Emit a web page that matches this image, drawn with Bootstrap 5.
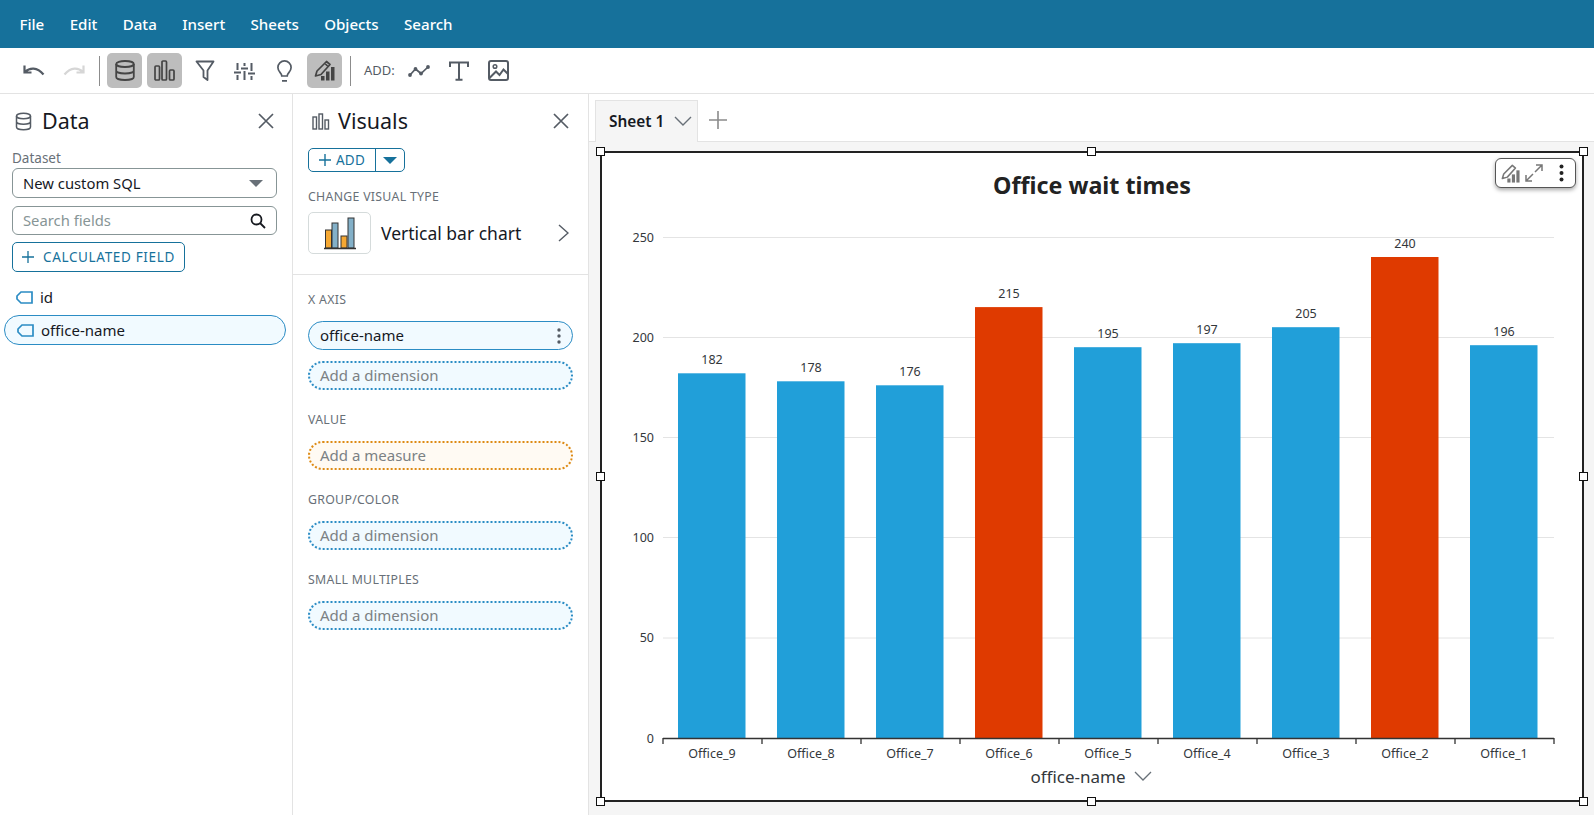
<!DOCTYPE html>
<html lang="en"><head><meta charset="utf-8"><title>Office wait times</title>
<link href="https://cdn.jsdelivr.net/npm/bootstrap@5.3.0/dist/css/bootstrap.min.css" rel="stylesheet">
<style>
html,body{height:100%;overflow:hidden}
body{font-family:"Noto Sans","Liberation Sans",sans-serif;color:#16191f;font-size:14.8px;display:flex;flex-direction:column;background:#fff}
.topbar{height:48px;background:#16719b;padding:0 19px 0 19.500px;gap:25.400px;flex:none}
.topbar a{color:#fff;font-size:15.100px;font-weight:500;text-decoration:none;padding:0}
.toolbar{height:46px;border-bottom:1px solid #e3e3e3;padding:0 0 0 16px;flex:none;color:#555}
.tb-btn{width:35px;height:35px;padding:0;border:0;border-radius:5px;display:flex;align-items:center;justify-content:center;color:#545b64;margin-right:5px}
.tb-btn.on{background:#bdbdbd;color:#444}
.tb-sep{width:1px;height:30px;background:#8c8c8c;margin:0 7px 0 3px}
.tb-add{font-size:13px;color:#545b64;margin:0 3px 0 6px;width:34px}
.mainrow{flex:1;min-height:0}
.sidepanel{flex:none;border-right:1px solid #e3e3e3;background:#fff;position:relative}
.p-data{width:293px}.p-vis{width:296px}
.ptitle{font-size:21.500px;line-height:30px;font-weight:400;margin:0;color:#16191f}
.phead{height:30px;margin-top:12px;padding:0 18px 0 15px;gap:10px}
.p-vis .phead{padding:0 19px 0 19px;gap:8px}
.xbtn{margin-left:auto;color:#545b64;display:flex}
.lbl{font-size:13.500px;color:#687078;line-height:16px}
.sel{height:30px;border:1px solid #879596;border-radius:6px;padding:0 10px;font-size:14.800px;color:#16191f;margin:0 15px 0 12px;width:265px}
.caret{width:0;height:0;border-left:7px solid transparent;border-right:7px solid transparent;border-top:7px solid #687078}
.searchbox{height:29px;border:1px solid #879596;border-radius:6px;padding:0 10px;color:#879596;font-size:14.800px;margin:9px 15px 0 12px;width:265px}
.calc{margin:7px 0 0 12px;height:30px;width:173px;border:1px solid #16719b;border-radius:5px;color:#16719b;font-size:13.500px;font-weight:400;letter-spacing:.65px;padding:0 0 0 9px;gap:9px;background:#fff;white-space:nowrap}
.calc:hover{color:#16719b;border-color:#16719b}
.frow{height:29px;padding-left:16px;gap:7px;font-size:15px;color:#16191f}
.fpill{margin:3px 6px 0 4px;height:30px;border:1px solid #2b8cc4;border-radius:15px;background:#f1faff;padding-left:12px}
.addbtn{margin:12px 0 0 15px;width:97px;height:24px;border:1px solid #16719b;border-radius:5px;color:#16719b;font-size:13.500px;font-weight:400;letter-spacing:.3px;overflow:hidden}
.addbtn span.a{flex:1;display:flex;align-items:center;justify-content:center;gap:5px;height:100%}
.addbtn span.b{width:29px;height:100%;border-left:1px solid #16719b;display:flex;align-items:center;justify-content:center}
.addbtn .caret{border-top-color:#16719b}
.seclbl{font-size:12.300px;letter-spacing:.3px;color:#687078;line-height:16px;padding-left:15px;text-transform:uppercase}
.typer{margin:7px 15px 0;height:42px;gap:10px;font-size:17.500px}
.thumb{width:63px;height:42px;border:1px solid #d5dbdb;border-radius:5px}
.pdiv{border-top:1px solid #e3e3e3;margin-top:20px;padding-top:17px}
.well{margin:13px 15px 0;height:29px;border-radius:15px;padding:0 11px;font-size:15px;display:flex;align-items:center;color:#16191f}
.well.solid{border:1px solid #2b8cc4;background:#f1faff;justify-content:space-between}
.well.dim{border:2px dotted #2b8cc4;background:#f1faff;color:#7b8184;margin-top:11px;padding-left:10px}
.well.meas{border:2px dotted #dd8a14;background:#fffaf3;color:#7b8184;margin-top:13px;padding-left:10px}
.canvasarea{flex:1;min-width:0;background:#f5f5f5;display:flex;flex-direction:column}
.tabstrip{height:48px;background:#fff;border-bottom:1px solid #e3e3e3;padding-left:6px;flex:none}
.sheet-tab{width:103px;height:42px;margin-top:6px;background:#f5f5f5;border:1px solid #e3e3e3;border-bottom:0;padding:0 5px 0 13px;font-weight:600;font-size:15.400px;justify-content:space-between}
.sheet-tab span{padding-top:2px}
.plus{margin:4px 0 0 11px;color:#8b8b8b;display:flex}
.stage{flex:1;padding:9px 10px 13px 11px;min-height:0}
.visual{position:relative;height:100%;border:2px solid #222;background:#fff}
.visual svg.chart{display:block;width:100%;height:100%}
.hd{position:absolute;width:9px;height:9px;background:#fff;border:1.5px solid #111}
.hl{left:-6px}.hc{left:calc(50% - 5px)}.hr{right:-6px}.ht{top:-6px}.hm{top:calc(50% - 5px)}.hb{bottom:-6px}
.mini{position:absolute;top:5px;right:6px;width:81px;height:30px;background:#fff;border:1px solid #555;border-radius:6px;box-shadow:0 2px 4px rgba(0,0,0,.35);padding-left:5px;gap:5px;color:#777}
svg text{font-family:"Noto Sans","Liberation Sans",sans-serif;fill:#33373b}
</style></head>
<body>
<nav class="navbar topbar d-flex align-items-center justify-content-start flex-nowrap">
<a href="#">File</a><a href="#">Edit</a><a href="#">Data</a><a href="#">Insert</a><a href="#">Sheets</a><a href="#">Objects</a><a href="#">Search</a>
</nav>
<div class="toolbar d-flex align-items-center">
<button class="btn tb-btn" aria-label="Undo"><svg width="22" height="14" viewBox="0 0 22 14" fill="none" stroke="#545b64" stroke-width="2.200"><path d="M1.500 1.500v7h7M2 8c4.500-4.500 12-5.500 18.500 2.500"/></svg></button>
<button class="btn tb-btn" aria-label="Redo"><svg width="22" height="14" viewBox="0 0 22 14" fill="none" stroke="#d6d6d6" stroke-width="2.200"><path d="M20.500 1.500v7h-7M20 8C15.500 3.500 8 2.500 1.500 10.500"/></svg></button>
<span class="tb-sep"></span>
<button class="btn tb-btn on" aria-label="Data"><svg width="20" height="21" viewBox="0 0 20 21" fill="none" stroke="currentColor" stroke-width="1.800"><ellipse cx="10" cy="4" rx="8.800" ry="3"/><path d="M1.200 4v13c0 1.700 3.900 3 8.800 3s8.800-1.300 8.800-3V4M1.200 10.500c0 1.700 3.900 3 8.800 3s8.800-1.300 8.800-3"/></svg></button>
<button class="btn tb-btn on" aria-label="Visuals"><svg width="21" height="21" viewBox="0 0 21 21" fill="none" stroke="currentColor" stroke-width="1.700"><rect x="1" y="6" width="4.500" height="14" rx="1"/><rect x="8" y="1" width="4.500" height="19" rx="1"/><rect x="15.500" y="10" width="4.500" height="10" rx="1"/></svg></button>
<button class="btn tb-btn" aria-label="Filter"><svg width="20" height="21" viewBox="0 0 20 21" fill="none" stroke="currentColor" stroke-width="1.800"><path d="M1.500 1.500h17l-6 9v9.500l-4-3v-6.500z" stroke-linejoin="round"/></svg></button>
<button class="btn tb-btn" aria-label="Properties"><svg width="21" height="18" viewBox="0 0 21 18" fill="none" stroke="currentColor" stroke-width="2"><path d="M3.500 1v7M3.500 13v5M10.500 1v3M10.500 9v9M17.500 1v8M17.500 14v4M0 10.500h7M7 6.500h7M14 11.500h7" stroke-width="2"/></svg></button>
<button class="btn tb-btn" aria-label="Insights"><svg width="15" height="22" viewBox="0 0 15 22" fill="none" stroke="currentColor" stroke-width="1.700"><path d="M4.800 16c0-3-3.900-4-3.900-8.500a6.600 6.600 0 0 1 13.200 0c0 4.500-3.900 5.500-3.900 8.500zM5 20.800h5"/></svg></button>
<button class="btn tb-btn on" aria-label="Format"><svg width="21" height="21" viewBox="0 0 21 21" fill="none" stroke="currentColor" stroke-width="1.700"><path d="M1.500 16l1.500-5L12.500 1.500l3.500 3L7 14.500z M11 3.500l3 3" stroke-linejoin="round"/><rect x="7" y="16" width="3.500" height="4.500" fill="currentColor" stroke="none"/><rect x="12" y="11.500" width="3.500" height="9" fill="currentColor" stroke="none"/><rect x="17" y="7" width="3.500" height="13.500" fill="currentColor" stroke="none"/></svg></button>
<span class="tb-sep"></span>
<span class="tb-add">ADD:</span>
<button class="btn tb-btn" aria-label="Add line"><svg width="22" height="12" viewBox="0 0 22 12" fill="none" stroke="currentColor" stroke-width="1.700"><path d="M2 10l5.500-6 5.500 4.500L20 2"/><g fill="currentColor" stroke="none"><circle cx="2" cy="10" r="1.900"/><circle cx="7.500" cy="4" r="1.900"/><circle cx="13" cy="8.500" r="1.900"/><circle cx="20" cy="2" r="1.900"/></g></svg></button>
<button class="btn tb-btn" aria-label="Add text"><svg width="20" height="20" viewBox="0 0 20 20" fill="none" stroke="currentColor" stroke-width="2"><path d="M1 6V1.500h18V6M10 1.500v17M6.500 18.800h7"/></svg></button>
<button class="btn tb-btn" aria-label="Add image"><svg width="21" height="21" viewBox="0 0 21 21" fill="none" stroke="currentColor" stroke-width="2"><rect x="1" y="1" width="19" height="19" rx="2"/><circle cx="7" cy="6.500" r="1.800" stroke-width="1.500"/><path d="M1.500 18l6.500-6.500 3.500 3.500 4-5.500 4.500 4.500"/></svg></button>
</div>
<div class="mainrow d-flex">
<aside class="sidepanel p-data">
<div class="phead d-flex align-items-center">
<svg width="17" height="19" viewBox="0 0 17 19" fill="none" stroke="#545b64" stroke-width="1.500"><ellipse cx="8.500" cy="4" rx="7" ry="2.800"/><path d="M1.500 4v11c0 1.500 3 2.800 7 2.800s7-1.300 7-2.800V4M1.500 9.500c0 1.500 3 2.800 7 2.800s7-1.300 7-2.800"/></svg>
<h2 class="ptitle">Data</h2>
<span class="xbtn"><svg width="16" height="16" viewBox="0 0 16 16" fill="none" stroke="currentColor" stroke-width="1.700"><path d="M1 1l14 14M15 1L1 15"/></svg></span>
</div>
<div class="lbl" style="margin:14px 0 2px 12px">Dataset</div>
<div class="sel d-flex align-items-center justify-content-between"><span>New custom SQL</span><span class="caret" style="margin-right:3px"></span></div>
<div class="searchbox d-flex align-items-center justify-content-between" style="margin-top:8px"><span>Search fields</span><svg width="16" height="16" viewBox="0 0 16 16" fill="none" stroke="#16191f" stroke-width="1.800"><circle cx="6.500" cy="6.500" r="5"/><path d="M10 10l5 5"/></svg></div>
<button class="btn calc d-flex align-items-center"><svg width="12" height="12" viewBox="0 0 12 12" stroke="#16719b" stroke-width="1.300"><path d="M6 0v12M0 6h12"/></svg>CALCULATED FIELD</button>
<div class="frow d-flex align-items-center" style="margin-top:11px"><svg width="17" height="13" viewBox="0 0 17 13" fill="none" stroke="#2b8cc4" stroke-width="1.700"><path d="M16 1H5L1 5l0 3 4 4h11z"/></svg>id</div>
<div class="fpill frow d-flex align-items-center"><svg width="17" height="13" viewBox="0 0 17 13" fill="none" stroke="#2b8cc4" stroke-width="1.700"><path d="M16 1H5L1 5l0 3 4 4h11z"/></svg>office-name</div>
</aside>
<aside class="sidepanel p-vis">
<div class="phead d-flex align-items-center">
<svg width="18" height="17" viewBox="0 0 18 17" fill="none" stroke="#545b64" stroke-width="1.400"><rect x="1" y="4" width="3.500" height="12"/><rect x="7" y="1" width="3.500" height="15"/><rect x="13" y="7" width="3.500" height="9"/></svg>
<h2 class="ptitle">Visuals</h2>
<span class="xbtn"><svg width="16" height="16" viewBox="0 0 16 16" fill="none" stroke="currentColor" stroke-width="1.700"><path d="M1 1l14 14M15 1L1 15"/></svg></span>
</div>
<div class="addbtn d-flex align-items-center"><span class="a"><svg width="12" height="12" viewBox="0 0 12 12" stroke="#16719b" stroke-width="1.400"><path d="M6 0v12M0 6h12"/></svg>ADD</span><span class="b"><span class="caret"></span></span></div>
<div class="seclbl" style="margin-top:17px">Change visual type</div>
<div class="typer d-flex align-items-center">
<span class="thumb d-flex align-items-center justify-content-center"><svg width="34" height="36" viewBox="0 0 34 36"><g stroke="#333" stroke-width="1"><rect x="2.500" y="15" width="6" height="18" fill="#f5a833"/><rect x="9" y="8" width="6" height="25" fill="#83b0c8"/><rect x="18" y="21" width="6" height="12" fill="#f5a833"/><rect x="25" y="3" width="6" height="30" fill="#83b0c8"/></g><path d="M1 33.500h32" stroke="#333" stroke-width="1.500"/></svg></span>
<span>Vertical bar chart</span>
<svg class="ms-auto" style="margin-right:4px" width="11" height="18" viewBox="0 0 11 18" fill="none" stroke="#545b64" stroke-width="1.400"><path d="M1 1l9 8-9 8"/></svg>
</div>
<div class="pdiv"><div class="seclbl">X axis</div></div>
<div class="well solid"><span>office-name</span><svg width="4" height="16" viewBox="0 0 4 16" fill="#545b64"><circle cx="2" cy="2" r="1.700"/><circle cx="2" cy="8" r="1.700"/><circle cx="2" cy="14" r="1.700"/></svg></div>
<div class="well dim">Add a dimension</div>
<div class="seclbl" style="margin-top:22px">Value</div>
<div class="well meas">Add a measure</div>
<div class="seclbl" style="margin-top:22px">Group/Color</div>
<div class="well dim" style="margin-top:13px">Add a dimension</div>
<div class="seclbl" style="margin-top:22px">Small multiples</div>
<div class="well dim" style="margin-top:13px">Add a dimension</div>
</aside>
<main class="canvasarea">
<div class="tabstrip d-flex align-items-center">
<div class="sheet-tab d-flex align-items-center"><span>Sheet 1</span><svg width="18" height="11" viewBox="0 0 18 11" fill="none" stroke="#687078" stroke-width="1.400"><path d="M1 1l8 8 8-8"/></svg></div>
<span class="plus"><svg width="18" height="18" viewBox="0 0 18 18" stroke="currentColor" stroke-width="1.600"><path d="M9 0v18M0 9h18"/></svg></span>
</div>
<div class="stage">
<div class="visual">
<svg class="chart" viewBox="602 153 980 647" preserveAspectRatio="none">
<text x="1092" y="194" text-anchor="middle" font-size="23.300" font-weight="700" style="fill:#222">Office wait times</text>
<g stroke="#e4e4e4" stroke-width="1"><path d="M663 237.500h891M663 337.500h891M663 437.500h891M663 537.500h891M663 638h891"/></g>
<g fill="#219fd9"><rect x="678" y="373.300" width="67.500" height="364.700"/><rect x="777" y="381.300" width="67.500" height="356.700"/><rect x="876" y="385.300" width="67.500" height="352.700"/><rect x="1074" y="347.200" width="67.500" height="390.800"/><rect x="1173" y="343.200" width="67.500" height="394.800"/><rect x="1272" y="327.200" width="67.500" height="410.800"/><rect x="1470" y="345.200" width="67.500" height="392.800"/></g>
<g fill="#df3a00"><rect x="975" y="307.100" width="67.500" height="430.900"/><rect x="1371" y="257" width="67.500" height="481"/></g>
<path d="M663 738.500h891M663 738v6M762 738v6M861 738v6M960 738v6M1059 738v6M1158 738v6M1257 738v6M1356 738v6M1455 738v6M1554 738v6" stroke="#333" stroke-width="1.300" fill="none"/>
<g font-size="12.500" text-anchor="end"><text x="654" y="242">250</text><text x="654" y="342">200</text><text x="654" y="442">150</text><text x="654" y="542">100</text><text x="654" y="642">50</text><text x="654" y="743">0</text></g>
<g font-size="12.500" text-anchor="middle"><text x="712" y="364">182</text><text x="811" y="372">178</text><text x="910" y="376">176</text><text x="1009" y="298">215</text><text x="1108" y="338">195</text><text x="1207" y="334">197</text><text x="1306" y="318">205</text><text x="1405" y="248">240</text><text x="1504" y="336">196</text></g>
<g font-size="12.500" text-anchor="middle"><text x="712" y="758">Office_9</text><text x="811" y="758">Office_8</text><text x="910" y="758">Office_7</text><text x="1009" y="758">Office_6</text><text x="1108" y="758">Office_5</text><text x="1207" y="758">Office_4</text><text x="1306" y="758">Office_3</text><text x="1405" y="758">Office_2</text><text x="1504" y="758">Office_1</text></g>
<text x="1078" y="783" text-anchor="middle" font-size="17">office-name</text>
<path d="M1135 772l8 8 8-8" fill="none" stroke="#687078" stroke-width="1.300"/>
</svg>
<span class="hd hl ht"></span><span class="hd hc ht"></span><span class="hd hr ht"></span>
<span class="hd hl hm"></span><span class="hd hr hm"></span>
<span class="hd hl hb"></span><span class="hd hc hb"></span><span class="hd hr hb"></span>
<div class="mini d-flex align-items-center">
<svg width="19" height="19" viewBox="0 0 21 21" fill="none" stroke="currentColor" stroke-width="1.700"><path d="M1.500 16l1.500-5L12.500 1.500l3.500 3L7 14.500z" stroke-linejoin="round"/><rect x="7" y="16" width="3.500" height="4.500" fill="currentColor" stroke="none"/><rect x="12" y="11.500" width="3.500" height="9" fill="currentColor" stroke="none"/><rect x="17" y="7" width="3.500" height="13.500" fill="currentColor" stroke="none"/></svg>
<svg width="18" height="18" viewBox="0 0 18 18" fill="none" stroke="currentColor" stroke-width="1.500"><path d="M11 1h6v6M17 1l-7 7M7 17H1v-6M1 17l7-7"/></svg>
<svg style="margin-left:11px" width="5" height="18" viewBox="0 0 5 18" fill="#222"><circle cx="2.500" cy="2.500" r="2"/><circle cx="2.500" cy="9" r="2"/><circle cx="2.500" cy="15.500" r="2"/></svg>
</div>
</div>
</div>
</main>
</div>
<script src="https://cdn.jsdelivr.net/npm/bootstrap@5.3.0/dist/js/bootstrap.bundle.min.js"></script>
</body></html>
